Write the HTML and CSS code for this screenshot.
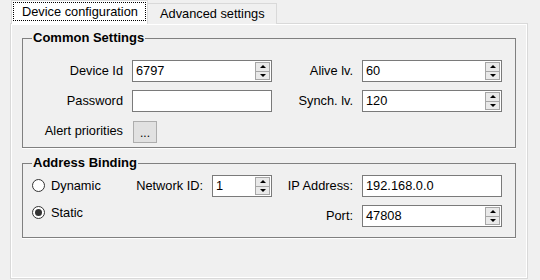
FILE: index.html
```html
<!DOCTYPE html>
<html lang="en">
<head>
  <meta charset="UTF-8" />
  <title>Device configuration</title>
  <link rel="stylesheet" href="styles.css">
</head>
<body>

  <div class="tabs">
    <div class="tab active"><span class="focus">Device configuration</span></div>
    <div class="tab">Advanced settings</div>
  </div>

  <div class="panel">
    <fieldset class="group">
      <legend>Common Settings</legend>
      <div class="common-grid">
        <label class="lbl">Device Id</label>
        <div class="box"><span class="val">6797</span><div class="spin"><span class="up"></span><span class="down"></span></div></div>
        <label class="lbl">Alive lv.</label>
        <div class="box"><span class="val">60</span><div class="spin"><span class="up"></span><span class="down"></span></div></div>

        <label class="lbl">Password</label>
        <div class="box"><span class="val"></span></div>
        <label class="lbl">Synch. lv.</label>
        <div class="box"><span class="val">120</span><div class="spin"><span class="up"></span><span class="down"></span></div></div>

        <label class="lbl">Alert priorities</label>
        <div class="btn-cell"><button class="dots">...</button></div>
      </div>
    </fieldset>

    <fieldset class="group">
      <legend>Address Binding</legend>
      <div class="addr-grid">
        <div class="radios">
          <label class="radio"><span class="circle"></span>Dynamic</label>
          <label class="radio"><span class="circle checked"></span>Static</label>
        </div>
        <label class="lbl">Network ID:</label>
        <div class="box"><span class="val">1</span><div class="spin"><span class="up"></span><span class="down"></span></div></div>
        <label class="lbl">IP Address:</label>
        <div class="box"><span class="val">192.168.0.0</span></div>

        <label class="lbl port-lbl">Port:</label>
        <div class="box port-box"><span class="val">47808</span><div class="spin"><span class="up"></span><span class="down"></span></div></div>
      </div>
    </fieldset>
  </div>

</body>
</html>
```

FILE: styles.css
```css
body {
  margin: 0;
  padding: 0 0 0 10px;
  background-color: #f0f0f0;
  font-family: "Liberation Sans", Arial, sans-serif;
  font-size: 12.8px;
  color: #000;
}
.tabs {
  display: flex;
  align-items: flex-end;
  height: 24px;
  margin-left: 1px;
  margin-bottom: -1px;
}
.tab {
  position: relative;
  box-sizing: border-box;
  height: 21px;
  line-height: 19px;
  padding: 0 11px 0 12px;
  border: 1px solid #d9d9d9;
  border-bottom: none;
  background-color: #f0f0f0;
}
.tab.active {
  z-index: 1;
  height: 24px;
  width: 137px;
  padding: 1px 1px 0 1px;
  background-color: #fff;
  margin-right: -1px;
}
.tab.active .focus {
  display: block;
  height: 19px;
  line-height: 18px;
  box-sizing: border-box;
  border: 1px dotted #000;
  padding-left: 8px;
  white-space: nowrap;
}
.panel {
  box-sizing: border-box;
  width: 518px;
  height: 256px;
  border: 1px solid #d9d9d9;
  box-shadow: inset 0 0 0 1px #fff;
  padding: 7px 11px 0 11px;
}
.group {
  margin: 0 0 8px 0;
  border: 1px solid #808080;
  box-shadow: 0 1px 0 #fff;
  padding: 15px 0 5px 3px;
}
.group + .group {
  padding-top: 5px;
  padding-bottom: 10px;
}
.group legend {
  font-size: 13px;
  font-weight: bold;
  line-height: 14px;
  padding: 0 1px;
  margin-left: 6px;
}
.common-grid {
  display: grid;
  grid-template-columns: 100px 140px 78px 140px;
  grid-template-rows: 22px 22px 22px;
  column-gap: 6px;
  row-gap: 8px;
}
.addr-grid {
  display: grid;
  grid-template-columns: 104px 70px 60px 78px 140px;
  grid-template-rows: 22px 22px;
  column-gap: 6px;
  row-gap: 8px;
}
.lbl {
  text-align: right;
  padding-right: 3px;
  line-height: 22px;
  white-space: nowrap;
}
.box {
  display: flex;
  box-sizing: border-box;
  height: 22px;
  background-color: #fff;
  border: 1px solid #7a7a7a;
}
.val {
  flex: 1;
  padding-left: 3px;
  line-height: 20px;
}
.spin {
  display: flex;
  flex-direction: column;
  width: 15px;
  padding: 1px 1px 1px 0;
}
.spin span {
  flex: 1;
  display: flex;
  align-items: center;
  justify-content: center;
  background-color: #e9e9e9;
  border: 1px solid #a6a6a6;
}
.spin .down {
  border-top: none;
}
.spin .up::after,
.spin .down::after {
  content: "";
  border-left: 3px solid transparent;
  border-right: 3px solid transparent;
}
.spin .up::after {
  border-bottom: 3px solid #000;
}
.spin .down::after {
  border-top: 3px solid #000;
}
.btn-cell {
  display: flex;
}
.dots {
  width: 24px;
  height: 22px;
  margin: 1px 0 0 1px;
  padding: 0 0 2px 0;
  background-color: #e1e1e1;
  border: 1px solid #adadad;
  font-family: inherit;
  font-size: 12px;
  color: #000;
  display: flex;
  align-items: flex-end;
  justify-content: center;
}
.radios {
  grid-row: span 2;
  display: flex;
  flex-direction: column;
  gap: 7px;
  padding-left: 6px;
}
.radio {
  display: flex;
  align-items: center;
  height: 20px;
  gap: 6px;
}
.circle {
  box-sizing: border-box;
  width: 13px;
  height: 13px;
  border: 1px solid #333;
  border-radius: 50%;
  background-color: #fff;
  display: flex;
  align-items: center;
  justify-content: center;
}
.circle.checked::after {
  content: "";
  width: 7px;
  height: 7px;
  border-radius: 50%;
  background-color: #333;
}
.port-lbl {
  grid-column: 4;
}
.port-box {
  grid-column: 5;
}
```
